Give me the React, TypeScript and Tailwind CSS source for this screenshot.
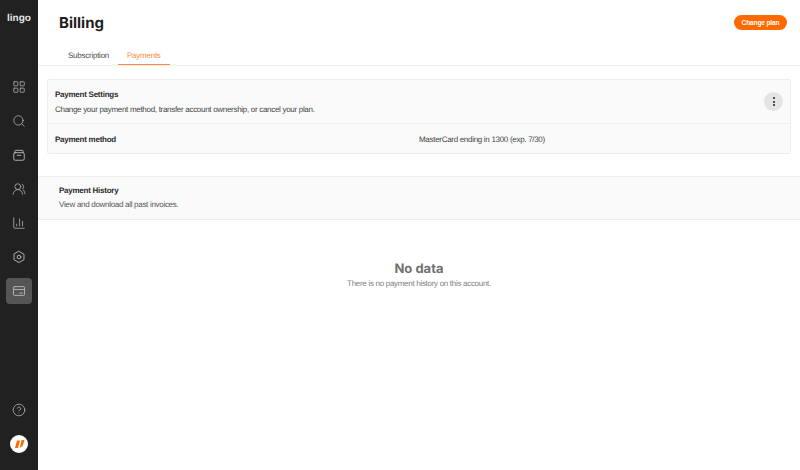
import { CircleHelp, LayoutGrid, Search, UsersRound, ChartColumn } from "lucide-react";
import type { ReactNode } from "react";

function SmallSvg({ children }: { children: ReactNode }) {
  return (
    <svg width="14" height="14" viewBox="0 0 24 24" fill="none" stroke="currentColor" strokeWidth="1.6" strokeLinecap="round" strokeLinejoin="round">
      {children}
    </svg>
  );
}

const navItems = [
  { icon: <LayoutGrid size={14} strokeWidth={1.3} /> },
  { icon: <Search size={14} strokeWidth={1.3} /> },
  {
    icon: (
      <SmallSvg>
        <rect x="3" y="8" width="18" height="13" rx="2.5" />
        <path d="M5 8V5.5A1.5 1.5 0 0 1 6.5 4h11A1.5 1.5 0 0 1 19 5.500V8" />
        <path d="M9 12.500h6" />
      </SmallSvg>
    ),
  },
  { icon: <UsersRound size={14} strokeWidth={1.3} /> },
  { icon: <ChartColumn size={14} strokeWidth={1.3} /> },
  {
    icon: (
      <SmallSvg>
        <path d="M12 2.500l8.500 4.800v9.400L12 21.500l-8.500-4.800V7.300z" />
        <circle cx="12" cy="12" r="3.200" />
      </SmallSvg>
    ),
  },
  {
    active: true,
    icon: (
      <SmallSvg>
        <rect x="2.500" y="4.500" width="19" height="15" rx="1.500" />
        <path d="M2.500 9.500h19M13.500 15.500h4.500" />
      </SmallSvg>
    ),
  },
];

function Sidebar() {
  return (
    <aside className="w-[38px] shrink-0 bg-[#212121] flex flex-col items-center text-[#b8b8b8]">
      <div className="h-[37px] pt-[10px] text-[10px] leading-[18px] font-bold text-[#e4e4e4]">lingo</div>
      <nav className="mt-[37px] flex flex-col items-center gap-[8px]">
        {navItems.map((item, i) => (
          <div
            key={i}
            className={`w-[26px] h-[26px] rounded-[4px] flex items-center justify-center ${item.active ? "bg-[#555555]" : ""}`}
          >
            {item.icon}
          </div>
        ))}
      </nav>
      <div className="mt-auto flex flex-col items-center gap-[18px] pb-[17px]">
        <CircleHelp size={14} strokeWidth={1.3} />
        <div className="w-[18px] h-[18px] rounded-full bg-white flex items-center justify-center">
          <svg width="11" height="10" viewBox="0 0 11 10">
            <path d="M3 1.500h3L4 9H1zM7.500 1H10.500L8.800 6.800 5.800 9z" fill="#ff6a00" />
          </svg>
        </div>
      </div>
    </aside>
  );
}

export default function App() {
  return (
    <div className="w-[800px] h-[470px] flex overflow-hidden bg-white font-['Liberation_Sans',sans-serif] text-[#2b2b2b] [text-rendering:geometricPrecision]">
      <Sidebar />
      <main className="flex-1 min-w-0 flex flex-col">
        <header className="h-[46px] pl-[21px] pr-[13px] flex items-center justify-between">
          <h1 className="font-['Inter',sans-serif] text-[15px] font-bold text-[#1f1f1f]">Billing</h1>
          <button className="h-[15px] w-[53px] mb-[1px] rounded-full bg-[#ff6a00] text-white text-[6.5px] font-bold tracking-[-0.1px]">
            Change plan
          </button>
        </header>

        <div className="h-[20px] pl-[21px] flex items-end border-b border-[#eeeeee] text-[8px] tracking-[-0.25px]">
          <div className="h-[19px] pt-[4px] px-[9px] text-[#505050]">Subscription</div>
          <div className="h-[19px] pt-[4px] px-[9px] text-[#ff8a3c] border-b border-[#ff8a3c]">Payments</div>
        </div>

        <section className="mt-[13px] mx-[9px] h-[75px] rounded-[2px] border border-[#eeeeee] bg-[#fafafa] flex flex-col">
          <div className="h-[44px] pl-[7px] pr-[7px] flex items-center justify-between border-b border-[#eeeeee]">
            <div className="pt-[2px]">
              <div className="text-[8px] font-bold leading-[12px] tracking-[-0.25px]">Payment Settings</div>
              <div className="mt-[3px] text-[8px] leading-[12px] tracking-[-0.3px] text-[#444444]">
                Change your payment method, transfer account ownership, or cancel your plan.
              </div>
            </div>
            <div className="w-[19px] h-[19px] rounded-full bg-[#e4e4e7] flex flex-col items-center justify-center gap-[1.5px]">
              <span className="w-[2px] h-[2px] rounded-full bg-[#222222]" />
              <span className="w-[2px] h-[2px] rounded-full bg-[#222222]" />
              <span className="w-[2px] h-[2px] rounded-full bg-[#222222]" />
            </div>
          </div>
          <div className="flex-1 pl-[7px] pt-[2px] flex items-center text-[8px]">
            <div className="w-[364px] font-bold tracking-[-0.25px]">Payment method</div>
            <div className="text-[#444444] tracking-[-0.3px]">MasterCard ending in 1300 (exp. 7/30)</div>
          </div>
        </section>

        <section className="mt-[22px] h-[44px] pl-[21px] flex flex-col justify-center bg-[#fafafa] border-y border-[#eeeeee]">
          <div className="text-[8px] font-bold leading-[12px] tracking-[-0.25px]">Payment History</div>
          <div className="mt-[2px] text-[8px] leading-[12px] tracking-[-0.3px] text-[#555555]">View and download all past invoices.</div>
        </section>

        <div className="mt-[40px] flex flex-col items-center text-center">
          <div className="font-['Inter',sans-serif] text-[13px] leading-[18px] font-bold text-[#707070]">No data</div>
          <div className="text-[8px] leading-[12px] tracking-[-0.3px] text-[#808080]">There is no payment history on this account.</div>
        </div>
      </main>
    </div>
  );
}
